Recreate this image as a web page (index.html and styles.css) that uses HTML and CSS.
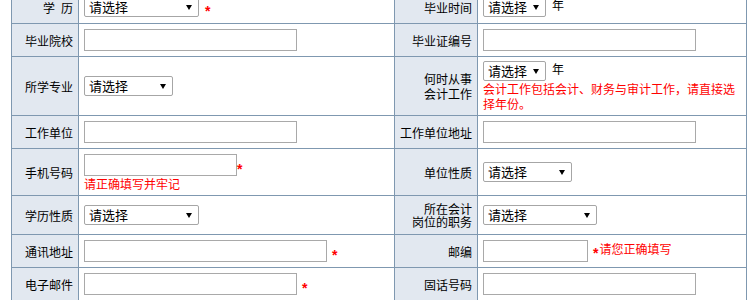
FILE: index.html
```html
<!DOCTYPE html>
<html lang="zh-CN">
<head>
<meta charset="utf-8">
<title>报名信息</title>
<link rel="stylesheet" href="styles.css">
</head>
<body>
<table class="form">
  <colgroup><col class="c1"><col class="c2"><col class="c3"><col class="c4"></colgroup>
  <tr class="h32">
    <th>学&ensp;历</th>
    <td><span class="sel w115"><select><option>请选择</option></select></span><span class="req gap7">*</span></td>
    <th>毕业时间</th>
    <td><span class="sel w63"><select><option>请选择</option></select></span><span class="unit">年</span></td>
  </tr>
  <tr class="h32">
    <th>毕业院校</th>
    <td><input class="txt w213" type="text"></td>
    <th>毕业证编号</th>
    <td><input class="txt w213" type="text"></td>
  </tr>
  <tr class="h58">
    <th>所学专业</th>
    <td><span class="sel w89"><select><option>请选择</option></select></span></td>
    <th class="l15">何时从事<br>会计工作</th>
    <td class="l15"><span class="sel w63"><select><option>请选择</option></select></span><span class="unit">年</span><br><span class="note">会计工作包括会计、财务与审计工作，请直接选择年份。</span></td>
  </tr>
  <tr class="h32">
    <th>工作单位</th>
    <td><input class="txt w213" type="text"></td>
    <th>工作单位地址</th>
    <td><input class="txt w213" type="text"></td>
  </tr>
  <tr class="h46">
    <th>手机号码</th>
    <td class="l15"><input class="txt w153" type="text"><span class="req">*</span><br><span class="note">请正确填写并牢记</span></td>
    <th>单位性质</th>
    <td><span class="sel w89"><select><option>请选择</option></select></span></td>
  </tr>
  <tr class="h38">
    <th>学历性质</th>
    <td><span class="sel w115"><select><option>请选择</option></select></span></td>
    <th class="l13">所在会计<br>岗位的职务</th>
    <td><span class="sel w114"><select><option>请选择</option></select></span></td>
  </tr>
  <tr class="h32">
    <th>通讯地址</th>
    <td><input class="txt w243" type="text"><span class="req gap6">*</span></td>
    <th>邮编</th>
    <td><input class="txt w105" type="text"><span class="note gap5"><span class="req note-star">*</span>请您正确填写</span></td>
  </tr>
  <tr class="h32">
    <th>电子邮件</th>
    <td><input class="txt w213" type="text"><span class="req gap6">*</span></td>
    <th>固话号码</th>
    <td><input class="txt w213" type="text"></td>
  </tr>
</table>
</body>
</html>
```

FILE: styles.css
```css
html, body {
  margin: 0;
  padding: 0;
  background: #fff;
}
body {
  font-family: "Noto Sans CJK SC", "Liberation Sans", sans-serif;
  font-size: 12px;
  color: #000;
}
.form {
  border-collapse: collapse;
  table-layout: fixed;
  width: 735px;
  margin: -10px 0 0 11px;
}
.c1 { width: 67px; }
.c2 { width: 316px; }
.c3 { width: 83px; }
.c4 { width: 269px; }
.form th,
.form td {
  border: 1px solid #7f98b0;
  padding: 0;
  vertical-align: middle;
  font-size: 12px;
  line-height: 15px;
}
.form th {
  background: #e2e8f0;
  font-weight: normal;
  text-align: right;
  padding-right: 5px;
}
.form td {
  background: #fff;
  text-align: left;
  padding-left: 5px;
  padding-right: 4px;
}
.h32 > th, .h32 > td { height: 32px; }
.h58 > th, .h58 > td { height: 58px; }
.h46 > th, .h46 > td { height: 46px; }
.h38 > th, .h38 > td { height: 38px; }
.l15 { line-height: 15px; }
.form th.l13 { line-height: 13px; }
.sel {
  position: relative;
  display: inline-block;
  vertical-align: middle;
}
.sel select {
  display: block;
  -webkit-appearance: none;
  appearance: none;
  box-sizing: border-box;
  width: 100%;
  height: 20px;
  margin: 0;
  padding: 0 0 0 4px;
  border: 1px solid #a6a6a6;
  border-radius: 2px;
  background: #fff;
  color: #000;
  font-family: "Noto Sans CJK SC", "Liberation Sans", sans-serif;
  font-size: 13px;
  line-height: 18px;
}
.sel::after {
  content: "";
  position: absolute;
  right: 7px;
  top: 8px;
  border-left: 3.5px solid transparent;
  border-right: 3.5px solid transparent;
  border-top: 5px solid #000;
  pointer-events: none;
}
.w63 { width: 63px; }
.w89 { width: 89px; }
.w114 { width: 114px; }
.w115 { width: 115px; }
.txt {
  box-sizing: border-box;
  height: 22px;
  margin: 0;
  padding: 0 3px;
  border: 1px solid #a9a9a9;
  background: #fff;
  vertical-align: middle;
  font-family: "Noto Sans CJK SC", "Liberation Sans", sans-serif;
  font-size: 13px;
}
.w105 { width: 105px; }
.w153 { width: 153px; }
.w213 { width: 213px; }
.w243 { width: 243px; }
.unit {
  margin-left: 6px;
  font-size: 12px;
}
.req {
  color: #f00;
  font-family: "Liberation Sans", sans-serif;
  font-size: 14px;
  font-weight: bold;
  vertical-align: -6px;
  line-height: 12px;
}
.note-star {
  vertical-align: -4px;
  margin-right: 1px;
}
.gap7 { margin-left: 6px; }
.gap6 { margin-left: 5px; }
.gap5 { margin-left: 5px; }
.note {
  color: #f00;
  font-size: 12px;
}
```
